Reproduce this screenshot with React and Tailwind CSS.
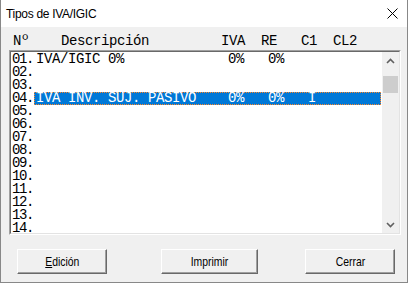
import React from "react";

const rows = [
  { n: "01.", t: "IVA/IGIC 0%             0%   0%" },
  { n: "02.", t: "" },
  { n: "03.", t: "" },
  { n: "04.", t: "IVA INV. SUJ. PASIVO    0%   0%   I", sel: true },
  { n: "05.", t: "" },
  { n: "06.", t: "" },
  { n: "07.", t: "" },
  { n: "08.", t: "" },
  { n: "09.", t: "" },
  { n: "10.", t: "" },
  { n: "11.", t: "" },
  { n: "12.", t: "" },
  { n: "13.", t: "" },
  { n: "14.", t: "" },
];

const monoBase = "font-['Liberation_Mono',monospace] text-[14px] leading-[13px] whitespace-pre";
const mono = monoBase + " tracking-[-0.4px]";

function Btn({ children, className }) {
  return (
    <div
      className={
        "h-[25px] flex items-center justify-center bg-[#f0f0f0] border border-t-white border-l-white border-r-[#696969] border-b-[#696969] shadow-[inset_-1px_-1px_0_#a0a0a0] " +
        className
      }
    >
      <span className="inline-block scale-x-80 font-['Liberation_Sans',sans-serif] text-[13px] text-black leading-none">
        {children}
      </span>
    </div>
  );
}

function Chevron({ up }) {
  return (
    <svg width="9" height="6" viewBox="0 0 9 6">
      <polyline
        points={up ? "1,5 4.5,1.5 8,5" : "1,1 4.5,4.5 8,1"}
        fill="none"
        stroke="#606060"
        strokeWidth="1.6"
      />
    </svg>
  );
}

export default function App() {
  return (
    <div className="w-[408px] h-[283px] flex flex-col border-x border-b border-[#888888] bg-[#f0f0f0] overflow-hidden">
      <div className="h-[27px] bg-white flex items-center justify-between pl-[5px] pr-[9px] shrink-0">
        <span className="font-['Liberation_Sans',sans-serif] text-[12px] tracking-[-0.3px] text-black">
          Tipos de IVA/IGIC
        </span>
        <svg width="11" height="11" viewBox="0 0 11 11">
          <path d="M0.5 0.5 L10.5 10.5 M10.5 0.5 L0.5 10.5" stroke="#000" strokeWidth="1" />
        </svg>
      </div>
      <div className="flex flex-col pt-[8px]">
        <div className={mono + " pl-[12px] text-black h-[13px]"}>
          {"Nº    Descripción         IVA  RE   C1  CL2"}
        </div>
        <div className="ml-[8px] mt-[2px] w-[392px] h-[185px] border border-t-[#a0a0a0] border-l-[#a0a0a0] border-r-white border-b-white">
          <div className="w-full h-full flex border border-t-[#696969] border-l-[#696969] border-r-[#e3e3e3] border-b-[#e3e3e3] bg-white">
            <div className="flex-1 overflow-hidden pt-[1px] pl-[1px]">
              {rows.map((r) => (
                <div key={r.n} className={"flex h-[13px] " + monoBase}>
                  <span className="w-[22px] shrink-0 text-black tracking-[-1.4px]">{r.n}</span>
                  {r.sel ? (
                    <span className="flex-1 mr-[1px] bg-[#0078d7] text-white border border-dotted border-[#ff8728] pl-[1px] leading-[11px] tracking-[-0.4px]">
                      {r.t}
                    </span>
                  ) : (
                    <span className="flex-1 pl-[2px] text-black tracking-[-0.4px]">{r.t}</span>
                  )}
                </div>
              ))}
            </div>
            <div className="w-[17px] bg-[#f0f0f0] flex flex-col">
              <div className="h-[17px] flex items-center justify-center">
                <Chevron up />
              </div>
              <div className="mt-[7px] h-[17px] mx-[1px] bg-[#cdcdcd]" />
              <div className="flex-1" />
              <div className="h-[17px] flex items-center justify-center">
                <Chevron />
              </div>
            </div>
          </div>
        </div>
        <div className="flex mt-[14px] pl-[16px]">
          <Btn className="w-[90px]">
            <span className="underline">E</span>dición
          </Btn>
          <Btn className="w-[97px] ml-[54px]">Imprimir</Btn>
          <Btn className="w-[90px] ml-[47px]">Cerrar</Btn>
        </div>
      </div>
    </div>
  );
}
